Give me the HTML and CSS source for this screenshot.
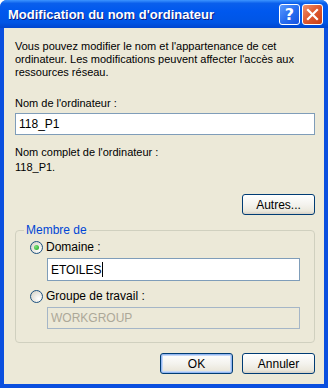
FILE: index.html
```html
<!DOCTYPE html>
<html lang="fr">
<head>
  <meta charset="UTF-8">
  <title>Modification du nom d'ordinateur</title>
  <link rel="stylesheet" href="styles.css">
</head>
<body>
  <div class="fenetre">
    <!-- Barre de titre -->
    <div class="barre-titre">
      <span class="titre">Modification du nom d'ordinateur</span>
      <div class="boutons-titre">
        <div class="btn-titre aide">?</div>
        <div class="btn-titre fermer">
          <svg width="13" height="13" viewBox="0 0 13 13">
            <path d="M2 2 L11 11 M11 2 L2 11" stroke="#fff" stroke-width="2.2" stroke-linecap="square"/>
          </svg>
        </div>
      </div>
    </div>

    <!-- Contenu -->
    <div class="client">
      <p class="intro">Vous pouvez modifier le nom et l'appartenance de cet ordinateur. Les modifications peuvent affecter l'accès aux ressources réseau.</p>

      <div class="champ-label">Nom de l'ordinateur :</div>
      <div class="saisie">118_P1</div>

      <div class="nom-complet">Nom complet de l'ordinateur :</div>
      <div class="nom-complet-valeur">118_P1.</div>

      <div class="ligne-autres">
        <button class="bouton">Autres...</button>
      </div>

      <fieldset class="groupe">
        <legend>Membre de</legend>
        <div class="option">
          <span class="radio coche"></span>
          <span>Domaine :</span>
        </div>
        <div class="saisie decale">ETOILES<span class="curseur"></span></div>
        <div class="option">
          <span class="radio"></span>
          <span>Groupe de travail :</span>
        </div>
        <div class="saisie decale desactive">WORKGROUP</div>
      </fieldset>

      <div class="ligne-boutons">
        <button class="bouton defaut">OK</button>
        <button class="bouton">Annuler</button>
      </div>
    </div>
  </div>
</body>
</html>
```

FILE: styles.css
```css
body {
  margin: 0;
  font-family: "Liberation Sans", Arial, sans-serif;
  font-size: 11px;
  background: #ffffff;
}

.fenetre {
  width: 328px;
  height: 388px;
  display: flex;
  flex-direction: column;
  background: #0a4fdf;
  border-radius: 7px 7px 0 0;
  box-sizing: border-box;
  overflow: hidden;
}

.barre-titre {
  height: 28px;
  flex-shrink: 0;
  display: flex;
  align-items: center;
  justify-content: space-between;
  padding: 0 5px 0 8px;
  background: linear-gradient(to bottom, #3d95ff 0%, #0a5fec 12%, #0058ee 40%, #0055e5 80%, #0045cf 100%);
}

.titre {
  color: #ffffff;
  font-weight: bold;
  font-size: 13px;
  text-shadow: 1px 1px #0a1b80;
  margin-top: 1px;
}

.boutons-titre {
  display: flex;
  gap: 2px;
  margin-top: 1px;
}

.btn-titre {
  width: 21px;
  height: 21px;
  box-sizing: border-box;
  border: 1px solid #ffffff;
  border-radius: 3px;
  display: flex;
  align-items: center;
  justify-content: center;
  color: #ffffff;
}

.aide {
  background: linear-gradient(135deg, #5a9bff 0%, #2a6ff0 50%, #1652e0 100%);
  font-family: "DejaVu Sans", sans-serif;
  font-weight: bold;
  font-size: 16px;
}

.fermer {
  background: linear-gradient(135deg, #f0926f 0%, #e05c33 45%, #c93e15 100%);
}

.client {
  flex: 1;
  margin: 0 4px 4px 4px;
  background: #ece9d8;
  padding: 12px 9px 0 11px;
  color: #000000;
}

.intro {
  margin: 0;
  line-height: 13px;
  width: 292px;
}

.champ-label {
  margin-top: 18px;
  line-height: 13px;
}

.saisie {
  margin-top: 3px;
  height: 22px;
  box-sizing: border-box;
  border: 1px solid #7f9db9;
  background: #ffffff;
  padding: 0 3px;
  line-height: 20px;
  font-size: 12px;
  display: flex;
  align-items: center;
}

.curseur {
  display: inline-block;
  width: 1px;
  height: 15px;
  background: #000000;
  margin-left: 1px;
}

.nom-complet {
  margin-top: 11px;
  line-height: 13px;
}

.nom-complet-valeur {
  margin-top: 2px;
  line-height: 13px;
}

.ligne-autres {
  display: flex;
  justify-content: flex-end;
  margin-top: 20px;
}

.bouton {
  width: 73px;
  height: 21px;
  box-sizing: border-box;
  border: 1px solid #003c74;
  border-radius: 3px;
  background: linear-gradient(to bottom, #ffffff 0%, #f4f3ee 50%, #ebe8dc 85%, #d6d0c5 100%);
  font-family: "Liberation Sans", Arial, sans-serif;
  font-size: 12px;
  color: #000000;
  padding: 0;
}

.bouton.defaut {
  box-shadow: inset 0 0 0 1px #95b8f2, inset 0 0 0 2px #c4d8f8;
}

.groupe {
  margin: 8px 0 0 0;
  padding: 2px 14px 13px 14px;
  border: 1px solid #d0d0bf;
  border-radius: 4px;
  min-width: 0;
}

.groupe legend {
  color: #0046d5;
  padding: 0 2px;
  margin-left: -6px;
  font-size: 12px;
}

.option {
  display: flex;
  align-items: center;
  gap: 3px;
  height: 16px;
  font-size: 12px;
}

.option + .saisie {
  margin-top: 3px;
}

.saisie + .option {
  margin-top: 7px;
}

.decale {
  margin-left: 17px;
  height: 23px;
}

.desactive {
  height: 22px;
  background: #ece9d8;
  color: #aca899;
  border-color: #a5b6c7;
}

.radio {
  width: 13px;
  height: 13px;
  box-sizing: border-box;
  border: 1px solid #1c5180;
  border-radius: 50%;
  background: radial-gradient(circle at 70% 70%, #ffffff 0%, #e4e2da 60%, #d0ccc0 100%);
  display: flex;
  align-items: center;
  justify-content: center;
}

.radio.coche::after {
  content: "";
  width: 5px;
  height: 5px;
  border-radius: 50%;
  background: radial-gradient(circle at 35% 35%, #7be27b, #21a121);
}

.ligne-boutons {
  display: flex;
  justify-content: flex-end;
  gap: 9px;
  margin-top: 10px;
}
```
